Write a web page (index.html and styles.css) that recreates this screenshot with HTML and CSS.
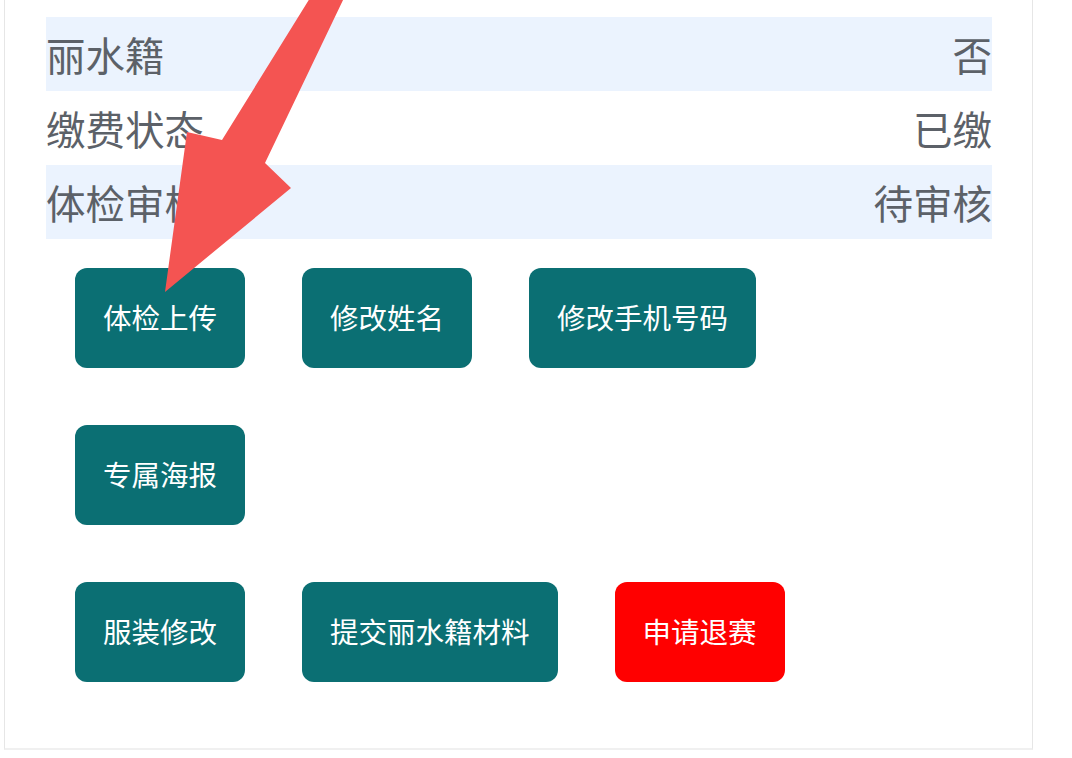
FILE: index.html
```html
<!DOCTYPE html>
<html lang="zh-CN">

<head>
  <meta charset="UTF-8" />
  <meta name="viewport" content="width=device-width, initial-scale=1.0" />
  <title>报名信息</title>
  <link rel="stylesheet" href="styles.css">
</head>

<body>
  <div class="card">
    <div class="info">
      <div class="row blue">
        <span>丽水籍</span>
        <span>否</span>
      </div>
      <div class="row">
        <span>缴费状态</span>
        <span>已缴</span>
      </div>
      <div class="row blue">
        <span>体检审核</span>
        <span>待审核</span>
      </div>
    </div>

    <div class="actions">
      <div class="btn-row">
        <button class="btn">体检上传</button>
        <button class="btn">修改姓名</button>
        <button class="btn">修改手机号码</button>
      </div>
      <div class="btn-row">
        <button class="btn">专属海报</button>
      </div>
      <div class="btn-row">
        <button class="btn">服装修改</button>
        <button class="btn">提交丽水籍材料</button>
        <button class="btn red">申请退赛</button>
      </div>
    </div>
  </div>

  <!-- annotation arrow drawn over the page -->
  <svg class="arrow" width="360" height="300" viewBox="0 0 360 300">
    <polygon points="310,-2 344,-2 265,163 291,188 165,292 187,132 222,140" fill="#f45452" />
  </svg>
</body>

</html>
```

FILE: styles.css
```css
body {
  margin: 0;
  padding: 0;
  background-color: #fff;
  font-family: "Noto Sans CJK SC", "Noto Sans", sans-serif;
}

.card {
  margin-left: 4px;
  width: 1029px;
  padding: 17px 40px 66px 41px;
  border-left: 1px solid #e6e6e6;
  border-right: 1px solid #e6e6e6;
  border-bottom: 2px solid #f0f0f0;
  background-color: #fff;
  box-sizing: border-box;
}

.row {
  display: flex;
  justify-content: space-between;
  height: 74px;
  line-height: 74px;
  font-size: 39.5px;
  color: #5c6168;
}

.blue {
  background-color: #ebf3fe;
}

.actions {
  padding: 29px 0 0 29px;
  display: flex;
  flex-direction: column;
  gap: 57px;
}

.btn-row {
  display: flex;
  gap: 57px;
}

.btn {
  height: 100px;
  padding: 0 28px 4px;
  border: none;
  border-radius: 12px;
  background-color: #0b6f73;
  color: #fff;
  font-family: "Noto Sans CJK SC", "Noto Sans", sans-serif;
  font-size: 28.5px;
}

.red {
  background-color: #ff0000;
}

.arrow {
  position: absolute;
  left: 0;
  top: 0;
}
```
